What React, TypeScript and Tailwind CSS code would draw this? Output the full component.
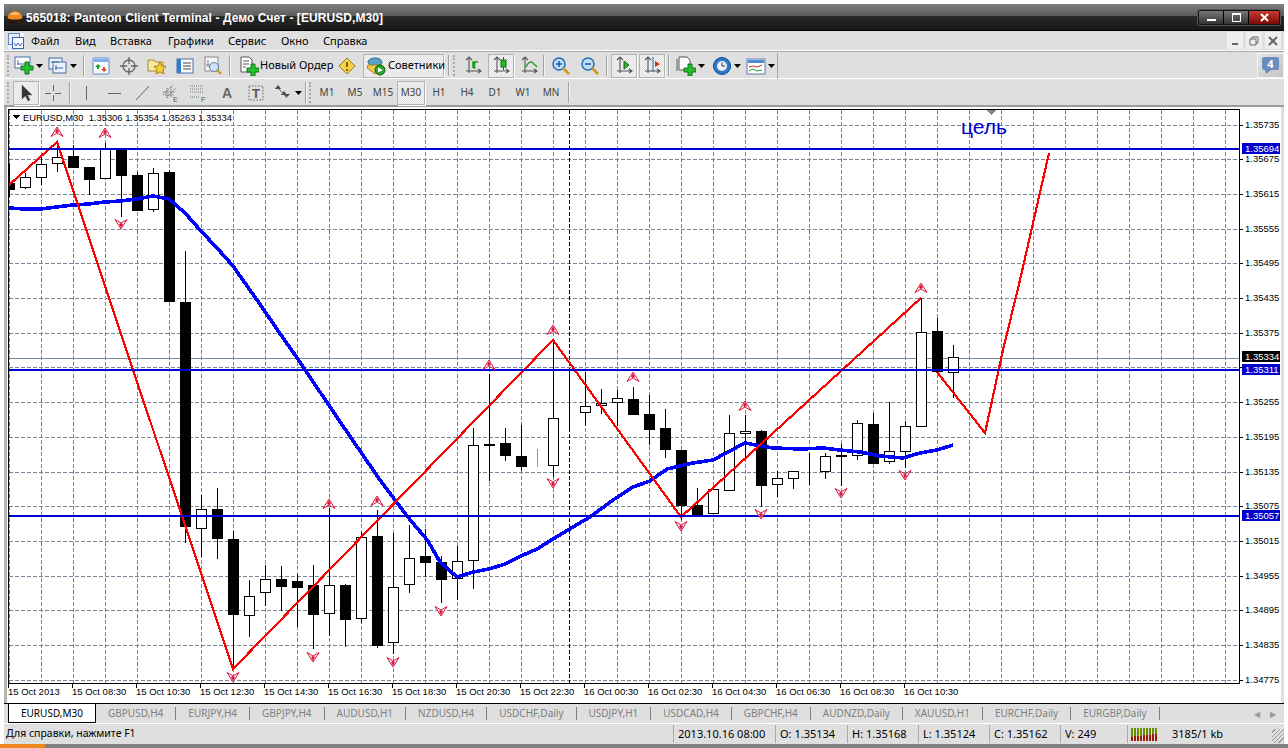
import React from "react";

type C = [number, number, number, number, number];
// wickTop, wickBottom, bodyTop, bodyBottom, kind (0 white, 1 black, 2 green)
const candles: C[] = [
  [163,197,183,190,1],[173,189,177,188,0],[155,185,164,178,0],[143,172,157,164,0],[145,168,156,168,1],[167,195,167,180,1],
  [143,179,148,179,0],[148,217,148,176,1],[172,211,175,211,1],[168,212,173,210,0],[170,302,172,302,1],[251,543,302,527,1],
  [495,557,509,529,0],[488,559,509,539,1],[531,669,539,615,1],[580,637,596,616,0],[565,606,579,593,0],[566,611,579,587,1],
  [574,627,581,588,1],[565,649,585,615,1],[508,636,585,614,0],[584,647,585,620,1],[532,623,537,619,0],[510,648,536,646,1],
  [533,654,587,643,0],[525,593,558,585,0],[529,577,556,563,1],[556,603,562,580,1],[546,600,561,579,0],[428,589,445,561,0],
  [374,481,444,446,0],[428,461,443,456,1],[425,471,456,467,1],[449,467,467,467,2],[340,477,418,466,0],[370,432,416,417,1],
  [372,426,406,413,0],[389,414,403,406,0],[390,426,398,403,0],[387,399,399,415,1],[395,445,414,430,1],[409,458,428,450,1],
  [450,520,450,506,1],[488,516,505,516,1],[489,514,489,514,0],[415,491,433,491,0],[415,458,431,434,0],[430,507,431,486,1],
  [471,497,478,485,0],[471,489,471,479,0],[453,485,472,473,1],[453,479,456,472,0],[444,486,455,457,0],[420,460,423,456,0],
  [413,464,424,464,1],[402,464,451,462,0],[421,468,426,452,0],[298,427,332,427,0],[318,372,331,372,1],[345,398,357,373,0],
];
const hY = Array.from({ length: 17 }, (_, i) => Math.round(124.7 + 34.68 * i));
// the 1.35315 level sits under the current-line label, so it shows no text
const prices = ["1.35735","1.35675","1.35615","1.35555","1.35495","1.35435","1.35375","","1.35255","1.35195","1.35135","1.35075","1.35015","1.34955","1.34895","1.34835","1.34775"];
const times = ["15 Oct 2013","15 Oct 08:30","15 Oct 10:30","15 Oct 12:30","15 Oct 14:30","15 Oct 16:30","15 Oct 18:30","15 Oct 20:30","15 Oct 22:30","16 Oct 00:30","16 Oct 02:30","16 Oct 04:30","16 Oct 06:30","16 Oct 08:30","16 Oct 10:30"];
const ups: [number, number][] = [[57,132],[105,133],[329,504],[377,501],[489,365],[553,330],[633,377],[745,406],[921,288]];
const downs: [number, number][] = [[121,224],[233,677],[313,657],[393,662],[441,611],[553,483],[681,526],[761,514],[841,493],[905,475]];
const ma = "9,208 25,209 41,209 57,207 73,205 89,204 105,202 121,201 137,199 153,196 169,199 185,213 201,231 217,248 233,266 257,300 281,335 300,362 320,392 345,429 380,480 407,516 428,541 440,562 457,577 473,572 489,569 505,564 521,556 537,549 553,539 573,527 590,517 613,500 633,487 650,481 667,469 693,463 713,460 745,443 773,448 802,449 823,448 840,450 860,452 880,456 903,458 920,453 937,450 953,445";

const Chart = () => (
  <svg width={1274} height={596} viewBox="7 107 1274 596" className="block" shapeRendering="crispEdges" style={{ fontFamily: '"Liberation Sans", sans-serif' }}>
    <defs><clipPath id="plot"><rect x={9} y={110} width={1230} height={573} /></clipPath></defs>
    <rect x={7} y={107} width={1274} height={596} fill="#fff" />
    <g stroke="#778899" strokeWidth={1} strokeDasharray="4 2">
      {hY.map((y) => <line key={y} x1={9} x2={1239} y1={y + 0.5} y2={y + 0.5} />)}
      {Array.from({ length: 39 }, (_, i) => 9 + 32 * i).map((x) => <line key={x} x1={x + 0.5} x2={x + 0.5} y1={110} y2={683} />)}
    </g>
    <g clipPath="url(#plot)">
      <line x1={569.5} x2={569.5} y1={110} y2={683} stroke="#000" strokeDasharray="4 2" />
      <line x1={9} x2={1239} y1={358.5} y2={358.5} stroke="#778899" />
      {candles.map((c, i) => {
        const x = 9 + 16 * i;
        const col = c[4] === 2 ? "#00ff00" : "#000";
        const top = Math.min(c[2], c[3]);
        const h = Math.abs(c[3] - c[2]);
        return (
          <g key={i}>
            <line x1={x + 0.5} x2={x + 0.5} y1={c[0]} y2={c[1]} stroke={col} />
            <rect x={x - 5 + 0.5} y={top + 0.5} width={10} height={Math.max(h - 1, 0)} fill={c[4] === 1 ? "#000" : "#fff"} stroke={col} />
          </g>
        );
      })}
      <polyline points={ma} fill="none" stroke="#0000ff" strokeWidth={3.6} />
      <polyline points="9,185 57,142 233,669 553,340 681,517 921,298" fill="none" stroke="#ff0000" strokeWidth={2.2} />
      <polyline points="937,372 985,433 1003,350 1020,280 1049,153" fill="none" stroke="#ff0000" strokeWidth={2.2} />
      <rect x={9} y={148} width={1230} height={2} fill="#0000cd" />
      <rect x={9} y={369} width={1230} height={2} fill="#0000cd" />
      <rect x={9} y={515} width={1230} height={2} fill="#0000cd" />
      {ups.map(([x, y]) => (
        <g key={x} shapeRendering="auto">
          <path d={`M${x} ${y - 5}L${x + 6} ${y + 4.5}L${x} ${y + 1}L${x - 6} ${y + 4.5}Z`} fill="#fff" stroke="#dc143c" />
          <path d={`M${x} ${y - 4}L${x + 2} ${y}L${x} ${y + 1}L${x - 2} ${y}Z`} fill="#dc143c" />
        </g>
      ))}
      {downs.map(([x, y]) => (
        <g key={x} shapeRendering="auto">
          <path d={`M${x} ${y + 5}L${x + 6} ${y - 4.5}L${x} ${y - 1}L${x - 6} ${y - 4.5}Z`} fill="#fff" stroke="#dc143c" />
          <path d={`M${x} ${y + 4}L${x + 2} ${y}L${x} ${y - 1}L${x - 2} ${y}Z`} fill="#dc143c" />
        </g>
      ))}
      <path d="M987 110h9l-4.500 5z" fill="#778899" />
      <text x={961} y={134} fontSize={21} fill="#0000cd" shapeRendering="auto">цель</text>
    </g>
    <path d="M8.500 683.500V109.500H1239.500V683.500H8.500" fill="none" stroke="#000" />
    <path d="M12 115h8l-4 4z" fill="#000" />
    <text x={23} y={121} fontSize={9.4} fill="#000" xmlSpace="preserve">EURUSD,M30  1.35306 1.35354 1.35263 1.35334</text>
    {hY.map((y, i) => (
      <g key={y}>
        <line x1={1240} x2={1243} y1={y + 0.5} y2={y + 0.5} stroke="#000" />
        {prices[i] && <text x={1245} y={y + 3} fontSize={9.5} fill="#000">{prices[i]}</text>}
      </g>
    ))}
    {times.map((t, i) => (
      <g key={t}>
        <line x1={8.500 + 64 * i} x2={8.500 + 64 * i} y1={684} y2={688} stroke="#000" />
        <text x={8 + 64 * i} y={695} fontSize={9.5} fill="#000">{t}</text>
      </g>
    ))}
    {([["1.35694", 143, "#0000cd"], ["1.35334", 351, "#000"], ["1.35311", 364, "#0000cd"], ["1.35057", 510, "#0000cd"]] as [string, number, string][]).map(([t, y, c]) => (
      <g key={t}>
        <rect x={1242} y={y} width={38} height={11} fill={c} />
        <text x={1245} y={y + 9} fontSize={9.5} fill="#fff">{t}</text>
      </g>
    ))}
  </svg>
);

const I = ({ children, w = 20 }: { children: React.ReactNode; w?: number }) => (
  <svg width={w} height={20} viewBox={`0 0 ${w} 20`} className="block shrink-0">{children}</svg>
);
const Plus = ({ x, y, s = 1 }: { x: number; y: number; s?: number }) => (
  <path transform={`translate(${x} ${y}) scale(${s})`} d="M4 0h4v4h4v4H8v4H4V8H0V4h4z" fill="#22c02a" stroke="#0b6a12" strokeWidth={0.9} />
);
const Drop = () => <svg width={7} height={4} className="block shrink-0"><path d="M0 0h7L3.500 4z" fill="#000" /></svg>;
const Axes = ({ c = "#555" }: { c?: string }) => <path d="M6 1v16M3 15h15M3 4l3-3 3 3M15 13l3 2-3 2" fill="none" stroke={c} strokeWidth={1.1} />;

const icons: Record<string, React.ReactNode> = {
  newChart: <I><rect x={1} y={1} width={15} height={11} fill="#fff" stroke="#4a6fa8" /><path d="M4 4v5M3 8h9M12 7l2 1-2 1" stroke="#4a6fa8" fill="none" /><Plus x={7} y={6} /></I>,
  profiles: <I><rect x={1} y={2} width={13} height={11} fill="#eaf2ff" stroke="#456a9e" /><rect x={5} y={6} width={13} height={11} fill="#eaf2ff" stroke="#456a9e" /><path d="M8 9v5M7 12h8M3 6h8" stroke="#456a9e" fill="none" /></I>,
  market: <I><rect x={2} y={2} width={16} height={16} rx={1} fill="#f7fbff" stroke="#5b8fd0" /><rect x={3} y={3} width={14} height={3} fill="#7fb0ea" /><path d="M7 8l3 3H8v2H6v-2H4z" fill="#22a02a" /><path d="M13 16l-3-3h2v-2h2v2h2z" fill="#e04a20" /></I>,
  cross: <I><circle cx={10} cy={10} r={6} fill="none" stroke="#666" strokeWidth={1.3} /><path d="M10 1v7M10 12v7M1 10h7M12 10h7" stroke="#666" strokeWidth={1.3} /></I>,
  folder: <I><path d="M1 4h6l2 2h7v9H1z" fill="#f6e6a0" stroke="#a08a30" /><path d="M13 6l2 4 4 .5-3 3 1 4.500-4-2-4 2 1-4.500-3-3 4-.5z" fill="#f5cf35" stroke="#a87f10" /></I>,
  nav: <I><rect x={2} y={3} width={16} height={14} fill="#fff" stroke="#4a6fa8" /><rect x={2} y={3} width={4} height={14} fill="#2c7fd0" /><path d="M8 7h8M8 10h8M8 13h8" stroke="#444" /></I>,
  tester: <I><rect x={2} y={1} width={13} height={14} fill="#f5f5f5" stroke="#888" /><path d="M5 4v7M3 9h8" stroke="#888" /><circle cx={11} cy={11} r={4.500} fill="#cfe3f7" stroke="#5a7fa0" /><path d="M14 14l4 4" stroke="#c89a20" strokeWidth={2.400} /></I>,
  order: <I><path d="M2 1h8l3 3v12H2z" fill="#fff" stroke="#555" /><path d="M4 5h6M4 8h6M4 11h3" stroke="#555" /><Plus x={8} y={8} /></I>,
  warn: <I><path d="M10 2l8 8-8 8-8-8z" fill="#f5d04a" stroke="#9c7a10" /><path d="M10 6v5M10 13v2" stroke="#8a5a00" strokeWidth={2} /></I>,
  expert: <I><ellipse cx={9} cy={6} rx={7} ry={4} fill="#5aa0c8" stroke="#2f6a90" /><path d="M2 9h14l1 3-8 6-8-6z" fill="#f0c850" stroke="#a08020" /><circle cx={14} cy={14} r={5} fill="#2ca02c" stroke="#0c600c" /><path d="M12 11.500l5 2.500-5 2.500z" fill="#fff" /></I>,
  bars: <I><Axes /><path d="M10 12V6h2M12 6h3M11.500 6v7" stroke="#1a9a1a" fill="none" strokeWidth={1.500} /></I>,
  candle: <I><Axes /><rect x={10} y={4} width={5} height={7} fill="#20c020" stroke="#0b6a12" /><path d="M12.500 1v3M12.500 11v3" stroke="#0b6a12" /></I>,
  line: <I><Axes /><path d="M7 11c2-5 5-6 7-4l4 4" stroke="#2a9a2a" fill="none" strokeWidth={1.300} /></I>,
  zoomIn: <I><circle cx={8} cy={8} r={6} fill="#bcdcf7" stroke="#2b6cb0" strokeWidth={1.500} /><path d="M5 8h6M8 5v6" stroke="#1d5aa0" strokeWidth={1.500} /><path d="M12 12l6 6" stroke="#c89a20" strokeWidth={2.600} /></I>,
  zoomOut: <I><circle cx={8} cy={8} r={6} fill="#bcdcf7" stroke="#2b6cb0" strokeWidth={1.500} /><path d="M5 8h6" stroke="#1d5aa0" strokeWidth={1.500} /><path d="M12 12l6 6" stroke="#c89a20" strokeWidth={2.600} /></I>,
  scroll: <I><Axes /><path d="M10 5l5 4-5 4z" fill="#30b030" stroke="#0b6a12" /></I>,
  shift: <I><Axes /><path d="M11 1v15" stroke="#2a6aa8" /><path d="M18 8l-5-3v6z" fill="#d03020" /></I>,
  tpl: <I><path d="M3 1h8l3 3v10H3z" fill="#fff" stroke="#555" /><path d="M1 3v12" stroke="#555" /><Plus x={8} y={8} /></I>,
  clock: <I><circle cx={10} cy={10} r={8.500} fill="#2a78c8" stroke="#0f4a90" /><circle cx={10} cy={10} r={5} fill="#eef" /><path d="M10 6.500V10h3" stroke="#333" fill="none" /></I>,
  ind: <I><rect x={1} y={3} width={18} height={15} fill="#fff" stroke="#5b7fb0" /><rect x={2} y={4} width={16} height={3} fill="#4a8ad0" /><path d="M3 11l4-1 4 1 5-2" stroke="#c03020" fill="none" /><path d="M3 15l4-2 4 2 5-1" stroke="#20a030" fill="none" /></I>,
  cursor: <I><path d="M6 2v14l3.500-3 2.500 5 2-1-2.500-5h4.500z" fill="#333" stroke="#666" strokeWidth={0.5} /></I>,
  crosshair: <I><path d="M10.500 2v6M10.500 12v6M2 10.500h6M12 10.500h6" stroke="#666" /></I>,
  vline: <I><path d="M10.500 3v14" stroke="#666" /></I>,
  hline: <I><path d="M4 10.500h13" stroke="#666" /></I>,
  diag: <I><path d="M4 17L17 3" stroke="#666" /></I>,
  fibE: <I><path d="M3 12L13 2M6 15L16 5M3 9h12M5 12h9M7 5v10M11 4v10" stroke="#666" fill="none" strokeWidth={0.9} strokeDasharray="1.500 .8" /><text x={13} y={19} fontSize={7} fill="#555" fontFamily="Liberation Sans">E</text></I>,
  fibF: <I><path d="M2 3h14M2 6h14M2 9h14M2 14h10" stroke="#777" strokeDasharray="1 1" /><text x={13} y={19} fontSize={7} fill="#555" fontFamily="Liberation Sans">F</text></I>,
  text: <I><text x={10} y={15} textAnchor="middle" fontSize={14} fontWeight={700} fill="#666" fontFamily="Liberation Sans">A</text></I>,
  label: <I><rect x={3} y={3} width={14} height={14} fill="none" stroke="#666" strokeDasharray="1.500 1.500" /><text x={10} y={15} textAnchor="middle" fontSize={13} fontWeight={700} fill="#555" fontFamily="Liberation Sans">T</text></I>,
  arrows: <I><path d="M5 2l3 4H2zM11 8l3 4H8z" fill="#444" /><path d="M5 5l9 10" stroke="#666" /><path d="M14 14l3 -3h-6z" fill="#444" /></I>,
};

const Grip = () => <div className="mx-[2px] h-[21px] w-[2px] shrink-0 border-l-2 border-dotted border-[#a8a8a8]" />;
const Sep = ({ cls }: { cls: string }) => <div className={`h-[21px] w-[2px] shrink-0 border-l border-[#a0a0a0] bg-[#f4f4f4] ${cls}`} />;
const press = "border border-[#b4b4b4] shadow-[1px_1px_0_#fff] bg-[repeating-conic-gradient(#f6f6f6_0_25%,#e0e0e0_0_50%)] bg-[length:2px_2px]";
const Btn = ({ name, w, p }: { name: string; w: string; p?: boolean }) => (
  <div className={`flex h-[24px] shrink-0 items-center justify-center gap-[3px] ${w} ${p ? press : ""}`}>{icons[name]}</div>
);
const DropBtn = ({ name, w }: { name: string; w: string }) => (
  <div className={`flex h-[24px] shrink-0 items-center justify-center gap-[2px] ${w}`}>{icons[name]}<Drop /></div>
);
const TF = ({ t, p }: { t: string; p?: boolean }) => (
  <div className={`flex h-[24px] w-[28px] shrink-0 items-center justify-center text-[10px] text-[#444] ${p ? press : ""}`}>{t}</div>
);

const menu: [string, string][] = [["Файл", "w-[44px]"], ["Вид", "w-[35px]"], ["Вставка", "w-[58px]"], ["Графики", "w-[60px]"], ["Сервис", "w-[53px]"], ["Окно", "w-[42px]"], ["Справка", "w-[60px]"]];
const tabs = ["GBPUSD,H4","EURJPY,H4","GBPJPY,H4","AUDUSD,H1","NZDUSD,H4","USDCHF,Daily","USDJPY,H1","USDCAD,H4","GBPCHF,H4","AUDNZD,Daily","XAUUSD,H1","EURCHF,Daily","EURGBP,Daily"];
const status: [string, string][] = [["2013.10.16 08:00", "w-[102px]"], ["O: 1.35134", "w-[72px]"], ["H: 1.35168", "w-[71px]"], ["L: 1.35124", "w-[71px]"], ["C: 1.35162", "w-[71px]"], ["V: 249", "w-[67px]"]];

export default function App() {
  return (
    <div className="flex h-[748px] w-[1288px] flex-col overflow-hidden bg-white pt-[4px] text-black" style={{ fontFamily: '"Noto Sans", "Liberation Sans", sans-serif' }}>
      <div className="mx-[4px] flex h-[27px] shrink-0 items-center bg-[linear-gradient(#808080_0,#5c5c5c_44%,#2a2a2a_44%,#181818_96%,#000_96%)] pl-[3px] pr-[4px]">
        <svg width={16} height={16} viewBox="0 0 16 16" className="mr-[3px] block shrink-0">
          <ellipse cx={8} cy={8} rx={7.500} ry={7} fill="#2a1a10" />
          <path d="M.5 8C.5 4 4 1 8 1s7.500 3 7.500 7c-2 2-13 2-15 0z" fill="#f08a20" />
          <path d="M3 4c2-2 8-2 10 0-3 1-7 1-10 0z" fill="#fcd090" />
        </svg>
        <span className="text-[12px] font-bold leading-none tracking-[0.07px] text-white" style={{ fontFamily: '"Liberation Sans", sans-serif' }}>565018: Panteon Client Terminal - Демо Счет - [EURUSD,M30]</span>
        <div className="ml-auto flex h-[15px] overflow-hidden rounded-[2px] border border-[#111] shadow-[0_0_0_1px_#555]">
          <div className="flex w-[25px] items-end justify-center border-r border-black bg-[linear-gradient(#777,#333)] pb-[3px]"><div className="h-[2px] w-[9px] bg-white" /></div>
          <div className="flex w-[25px] items-center justify-center border-r border-black bg-[linear-gradient(#777,#333)]"><div className="h-[9px] w-[9px] border border-t-2 border-white" /></div>
          <div className="flex w-[30px] items-center justify-center bg-[linear-gradient(#c83a30,#7a0a08)]"><svg width={9} height={9}><path d="M1 1l7 7M8 1l-7 7" stroke="#fff" strokeWidth={2} /></svg></div>
        </div>
      </div>
      <div className="mx-[4px] flex h-[20px] shrink-0 items-center border-b border-white bg-[#dfdfdf] pl-[4px] text-[11px]">
        <svg width={16} height={16} viewBox="0 0 16 16" className="mr-[7px] block shrink-0">
          <rect width={16} height={16} fill="#eef4ff" />
          <rect x={.5} y={.5} width={11} height={11} fill="#e4eefa" stroke="#6a8ac0" /><rect x={4.500} y={4.500} width={11} height={11} fill="#f4f8ff" stroke="#3a68b0" /><path d="M6 10l2 3 2-3 2 3 2-3" stroke="#3a68b0" fill="none" />
        </svg>
        {menu.map(([t, w]) => <div key={t} className={`${w} pt-[1px]`}>{t}</div>)}
        <div className="ml-auto flex gap-[3px] pr-[3px]">
          {[<path key="a" d="M3 9h6" stroke="#666" strokeWidth={2} />, <path key="b" d="M2 4h6v6H2zM4 4V2h6v6H8" stroke="#666" fill="none" />, <path key="c" d="M2 2l8 8M10 2l-8 8" stroke="#666" strokeWidth={2} />].map((p, i) => (
            <div key={i} className="flex h-[17px] w-[16px] items-center justify-center bg-[#eeeeee]"><svg width={12} height={12}>{p}</svg></div>
          ))}
        </div>
      </div>
      <div className="mx-[4px] flex h-[28px] shrink-0 items-center border-t border-[#a8a8a8] border-b border-b-white bg-[#dfdfdf] pl-[1px] pt-[1px] text-[11px]">
        <Grip />
        <DropBtn name="newChart" w="w-[35px]" />
        <DropBtn name="profiles" w="w-[32px]" />
        <Sep cls="ml-[5px] mr-[2px]" />
        {["market", "cross", "folder", "nav", "tester"].map((n) => <Btn key={n} name={n} w="w-[28px]" />)}
        <Sep cls="ml-[2px] mr-[4px]" />
        <div className="flex h-[24px] w-[97px] shrink-0 items-center gap-[1px] pl-[4px]">{icons.order}<span className="whitespace-nowrap">Новый Ордер</span></div>
        <Btn name="warn" w="w-[28px] ml-[1px]" />
        <div className={`ml-[2px] flex h-[24px] w-[81px] shrink-0 items-center gap-[2px] pl-[2px] ${press}`}>{icons.expert}<span>Советники</span></div>
        <Sep cls="ml-[4px] mr-[1px]" />
        <Grip />
        <Btn name="bars" w="w-[28px] ml-[2px]" />
        <Btn name="candle" w="w-[26px] ml-[1px]" p />
        <Btn name="line" w="w-[28px] ml-[1px]" />
        <Sep cls="mr-[2px]" />
        <Btn name="zoomIn" w="w-[28px]" />
        <Btn name="zoomOut" w="w-[30px]" />
        <Sep cls="ml-[1px] mr-[3px]" />
        <Btn name="scroll" w="w-[26px]" p />
        <Btn name="shift" w="w-[26px] ml-[2px]" p />
        <Sep cls="ml-[3px] mr-[2px]" />
        <DropBtn name="tpl" w="w-[36px]" />
        <DropBtn name="clock" w="w-[36px]" />
        <DropBtn name="ind" w="w-[33px]" />
        <div className="h-[26px] w-[1px] shrink-0 border-r border-[#a8a8a8]" />
        <div className="ml-auto flex h-[25px] w-[27px] flex-col items-center justify-center border border-[#f4f4f4] bg-[linear-gradient(135deg,#e4e4e4,#c4c4c4)]">
          <div className="flex h-[13px] w-[17px] items-center justify-center rounded-[2px] bg-[#6a8cc0] text-[11px] font-bold leading-none text-white">4</div>
          <svg width={17} height={4} className="block shrink-0"><path d="M3 0h6L4 4z" fill="#6a8cc0" /></svg>
        </div>
      </div>
      <div className="mx-[4px] flex h-[28px] shrink-0 items-center border-b-2 border-[#9a9a9a] bg-[#dfdfdf] pl-[1px] pt-[1px]">
        <Grip />
        <Btn name="cursor" w="w-[26px] ml-[2px]" p />
        <Btn name="crosshair" w="w-[27px]" />
        <Sep cls="ml-[3px] mr-[1px]" />
        {["vline", "hline", "diag", "fibE", "fibF"].map((n) => <Btn key={n} name={n} w="w-[28px]" />)}
        <Btn name="text" w="w-[29px]" />
        <Btn name="label" w="w-[29px]" />
        <DropBtn name="arrows" w="w-[33px] ml-[1px]" />
        <Sep cls="ml-[1px]" />
        <Grip />
        <TF t="M1" /><TF t="M5" /><TF t="M15" /><TF t="M30" p /><TF t="H1" /><TF t="H4" /><TF t="D1" /><TF t="W1" /><TF t="MN" />
        <Sep cls="ml-[3px]" />
      </div>
      <div className="mx-[4px] flex h-[596px] shrink-0 bg-[#dfdfdf]">
        <div className="w-[3px] shrink-0 bg-[#b4b4b4]" />
        <Chart />
      </div>
      <div className="mx-[4px] flex h-[20px] shrink-0 items-stretch border-t border-black bg-[#dfdfdf] pl-[4px] text-[10px] text-[#808080]">
        <div className="flex h-[19px] w-[88px] shrink-0 items-center justify-center border-x border-b border-black bg-white text-black">EURUSD,M30</div>
        {tabs.map((t) => (
          <div key={t} className="my-[3px] flex shrink-0 items-center whitespace-nowrap border-r border-[#808080] px-[12px]">{t}</div>
        ))}
        <div className="ml-auto flex items-center gap-[10px] pr-[8px] text-[8px] text-[#999]"><span>◀</span><span>▶</span></div>
      </div>
      <div className="mx-[4px] flex h-[21px] shrink-0 items-center border-t border-white bg-[#dfdfdf] text-[11px]">
        <div className="w-[669px] pl-[2px] text-[10.5px]">Для справки, нажмите F1</div>
        {status.map(([t, w]) => <div key={t} className={`h-[18px] ${w} border-l border-[#aaaaaa] pl-[4px] leading-[18px]`}>{t}</div>)}
        <div className="flex h-[18px] flex-1 items-center border-l border-[#aaaaaa] pl-[3px]">
          <svg width={26} height={13} viewBox="0 0 26 13" className="block shrink-0" shapeRendering="crispEdges">
            {Array.from({ length: 9 }, (_, i) => (
              <g key={i}>
                <rect x={i * 3} y={0} width={2} height={6 + Math.round((8 - i) / 3)} fill="#6b8e00" />
                <rect x={i * 3} y={8 + Math.round((8 - i) / 3) - 2} width={2} height={5 - Math.round((8 - i) / 3) + 2} fill="#a01808" />
              </g>
            ))}
          </svg>
          <span className="ml-[15px]">3185/1 kb</span>
          <div className="ml-auto h-[14px] w-[12px] self-end bg-[repeating-linear-gradient(135deg,#dfdfdf_0,#dfdfdf_2px,#999_2px,#999_3px)]" />
        </div>
      </div>
      <div className="flex h-[4px] shrink-0 bg-[#808080]"><div className="h-full w-[45px] bg-[#f08a20]" /></div>
    </div>
  );
}
